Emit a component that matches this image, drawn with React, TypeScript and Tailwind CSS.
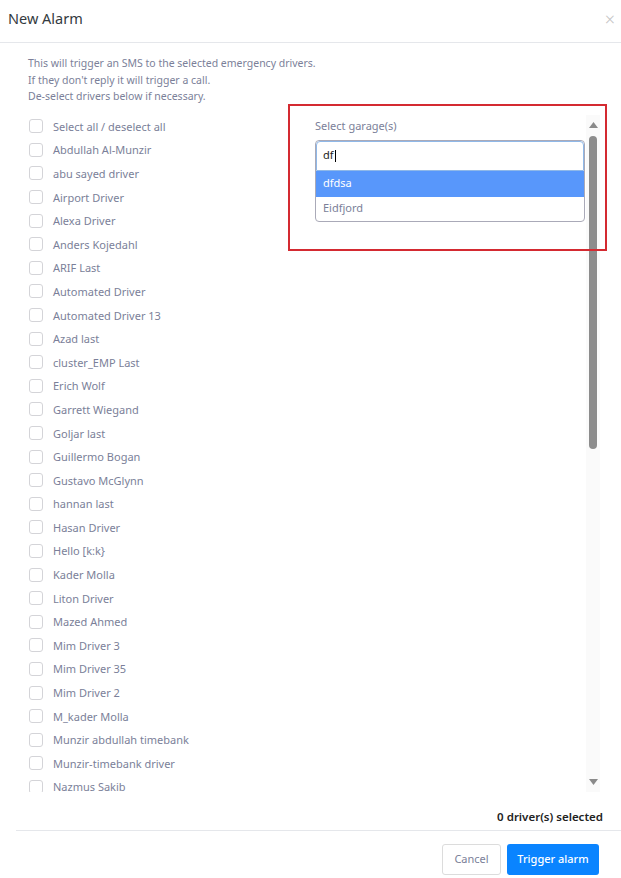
import { useState } from 'react';

const drivers = [
  'Abdullah Al-Munzir',
  'abu sayed driver',
  'Airport Driver',
  'Alexa Driver',
  'Anders Kojedahl',
  'ARIF Last',
  'Automated Driver',
  'Automated Driver 13',
  'Azad last',
  'cluster_EMP Last',
  'Erich Wolf',
  'Garrett Wiegand',
  'Goljar last',
  'Guillermo Bogan',
  'Gustavo McGlynn',
  'hannan last',
  'Hasan Driver',
  'Hello [k:k}',
  'Kader Molla',
  'Liton Driver',
  'Mazed Ahmed',
  'Mim Driver 3',
  'Mim Driver 35',
  'Mim Driver 2',
  'M_kader Molla',
  'Munzir abdullah timebank',
  'Munzir-timebank driver',
  'Nazmus Sakib',
];

function CheckRow({ label }: { label: string }) {
  return (
    <div className="flex h-[23.6px] items-center">
      <span className="h-[14px] w-[14px] shrink-0 rounded-[3px] border border-[#d4d4d8] bg-white" />
      <span className="ml-[10px] text-[11px] leading-none text-[#7b7f99]">{label}</span>
    </div>
  );
}

export default function App() {
  const [query] = useState('df');

  return (
    <div className="relative h-[878px] w-[621px] overflow-hidden bg-white font-['Noto_Sans',sans-serif]">
      <div className="flex h-[43px] items-center justify-between border-b border-[#e5e7eb] pb-[4px] pl-[8px] pr-[6px]">
        <span className="text-[14.5px] text-[#343a40]">New Alarm</span>
        <span className="text-[18px] font-light leading-none text-[#c4c4c4]">×</span>
      </div>

      <div className="pl-[28px] pt-[12px] text-[10.5px] leading-[16.5px] text-[#7b7f99]">
        <p>This will trigger an SMS to the selected emergency drivers.</p>
        <p>If they don't reply it will trigger a call.</p>
        <p>De-select drivers below if necessary.</p>
      </div>

      <div className="ml-[16px] mt-[10px] flex h-[677px] w-[584px]">
        <div className="flex flex-1 overflow-hidden">
          <div className="w-[286px] shrink-0 pl-[13px]">
            <CheckRow label="Select all / deselect all" />
            {drivers.map((d) => (
              <CheckRow key={d} label={d} />
            ))}
          </div>
          <div className="w-[283px] shrink-0 pl-[13px] pt-[4px]">
            <div className="text-[11px] leading-[13px] text-[#7b7f99]">Select garage(s)</div>
            <div className="mt-[8px] rounded-[4px] border border-[#aaaab8]">
              <div className="flex h-[30px] items-center rounded-t-[4px] border border-[#8fb8e8] px-[6px] text-[11px] text-[#222]">
                {query}
                <span className="ml-[1px] h-[12px] w-px bg-black" />
              </div>
              <div className="flex h-[26px] items-center bg-[#5897fb] px-[7px] text-[11px] text-white">dfdsa</div>
              <div className="flex h-[24px] items-center px-[7px] text-[11px] text-[#7b7f99]">Eidfjord</div>
            </div>
          </div>
        </div>

        <div className="flex w-[14px] flex-col items-center bg-[#fafafa] py-[7px]">
          <svg width="9" height="6" viewBox="0 0 9 6">
            <path d="M4.5 0 9 6H0z" fill="#8a8a8a" />
          </svg>
          <div className="mt-[8px] h-[313px] w-[8px] rounded-full bg-[#8c8c8c]" />
          <div className="flex-1" />
          <svg width="9" height="6" viewBox="0 0 9 6">
            <path d="M0 0h9L4.5 6z" fill="#8a8a8a" />
          </svg>
        </div>
      </div>

      <div className="flex justify-end pb-[7px] pr-[18px] pt-[19px] text-[11.5px] font-semibold leading-[12px] text-[#222]">
        0 driver(s) selected
      </div>

      <div className="ml-[16px] flex justify-end gap-[6px] border-t border-[#e5e7eb] pr-[22px] pt-[13px]">
        <button className="h-[31px] w-[59px] rounded-[3px] border border-[#dcdcdc] bg-white text-[11px] text-[#7b7f99]">
          Cancel
        </button>
        <button className="h-[31px] w-[92px] rounded-[3px] bg-[#0a84ff] text-[11px] font-medium text-white">
          Trigger alarm
        </button>
      </div>

      <div className="absolute left-[288px] top-[104px] h-[147px] w-[319px] border-2 border-[#d42a31]" />
    </div>
  );
}
